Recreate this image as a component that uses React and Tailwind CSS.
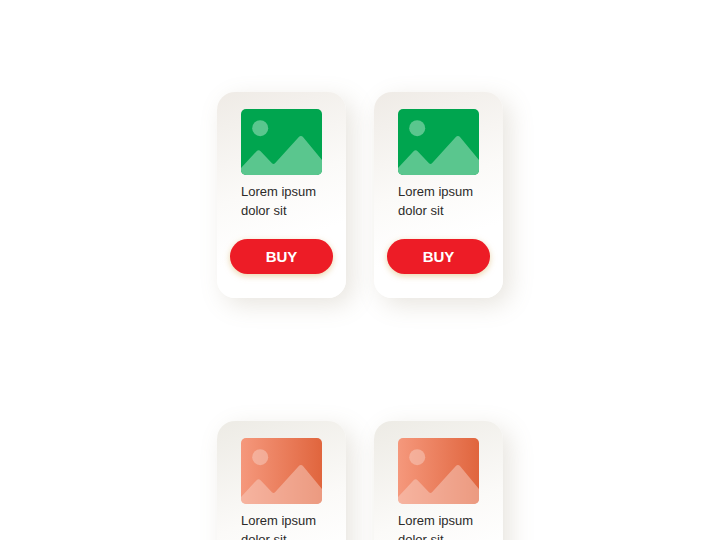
const products = [
  { id: 1, title: 'Lorem ipsum dolor sit', theme: 'green' },
  { id: 2, title: 'Lorem ipsum dolor sit', theme: 'green' },
  { id: 3, title: 'Lorem ipsum dolor sit', theme: 'coral' },
  { id: 4, title: 'Lorem ipsum dolor sit', theme: 'coral' },
];

const thumbStyles = {
  green: 'bg-[#00a54f] text-[#5ac68e]',
  coral: 'bg-linear-to-r from-[#f5987c] to-[#e0653d] text-[#f8d0c4]/50',
};

const cardStyles = {
  green: 'from-[#efebe6]',
  coral: 'from-[#edebe5]',
};

function Thumbnail({ theme }) {
  return (
    <div className={`mx-3 overflow-hidden rounded-[5px] ${thumbStyles[theme]}`}>
      <svg viewBox="0 0 81 66" className="block w-full" fill="currentColor" aria-hidden="true">
        <circle cx="19.2" cy="19.2" r="8" />
        <path d="M0 59 L15.6 42.2 Q17.6 40.2 19.6 42.2 L31 54.2 Q32.5 55.8 34 54.2 L57.6 28.2 Q60 25.6 62.4 28.4 L81 51 V66 H0 Z" />
      </svg>
    </div>
  );
}

function ProductCard({ title, theme }) {
  return (
    <article
      className={`flex flex-col rounded-[18px] bg-linear-160 via-[#fbfaf8] via-45% to-white to-70% px-3 pt-[17px] pb-6 shadow-[7px_7px_24px_rgba(140,125,95,0.2)] ${cardStyles[theme]}`}
    >
      <Thumbnail theme={theme} />
      <p className="mx-3 mt-[7px] text-[13px] leading-[19px] text-[#2b2a29]">{title}</p>
      <button
        type="button"
        className="mx-px mt-[19px] h-[35px] cursor-pointer rounded-full bg-[#ed1c26] pt-0.5 text-[15px] font-bold text-white shadow-[0_2px_6px_rgba(222,185,115,0.6)]"
      >
        BUY
      </button>
    </article>
  );
}

export default function App() {
  return (
    <main className="flex min-h-screen justify-center bg-white py-[92px] font-['Liberation_Sans',Arial,sans-serif]">
      {/* Product grid */}
      <div className="grid grid-cols-[129px_129px] gap-x-7 gap-y-[123px]">
        {products.map((product) => (
          <ProductCard key={product.id} title={product.title} theme={product.theme} />
        ))}
      </div>
    </main>
  );
}
